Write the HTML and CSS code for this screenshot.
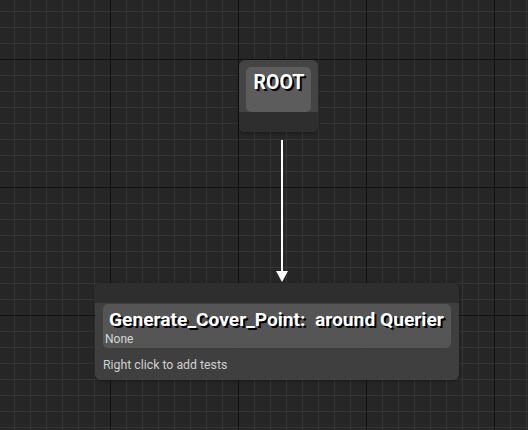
FILE: index.html
```html
<!DOCTYPE html>
<html lang="en">
  <head>
    <meta charset="UTF-8" />
    <meta name="viewport" content="width=device-width, initial-scale=1.0" />
    <title>Query Graph</title>
    <link rel="stylesheet" href="styles.css">
  </head>
  <body>
    <div class="graph">
      <div class="node root-node">
        <div class="root-inner">ROOT</div>
        <div class="root-pin"></div>
      </div>

      <svg class="wire" width="20" height="150" viewBox="0 0 20 150">
        <line x1="10" y1="0" x2="10" y2="132" stroke="#fff" stroke-width="2" />
        <polygon points="4,131 16,131 10,142" fill="#fff" />
      </svg>

      <div class="node option-node">
        <div class="option-pin"></div>
        <div class="option-inner">
          <div class="option-title">Generate_Cover_Point:&nbsp; around Querier</div>
          <div class="option-sub">None</div>
        </div>
        <div class="option-tests">Right click to add tests</div>
      </div>
    </div>
  </body>
</html>
```

FILE: styles.css
```css
body {
  margin: 0;
  font-family: Roboto, "Noto Sans", sans-serif;
}

.graph {
  position: relative;
  width: 528px;
  height: 430px;
  overflow: hidden;
  background-color: #262626;
  background-image:
    linear-gradient(to right, #121212 1px, transparent 1px),
    linear-gradient(to bottom, #121212 1px, transparent 1px),
    linear-gradient(to right, #353535 1px, transparent 1px),
    linear-gradient(to bottom, #353535 1px, transparent 1px);
  background-size: 128px 128px, 128px 128px, 16px 16px, 16px 16px;
  background-position: 110px 59px, 110px 59px, 14px 11px, 14px 11px;
}

.node {
  position: absolute;
  border-radius: 6px;
  overflow: hidden;
  box-shadow: 0 1px 3px rgba(0, 0, 0, 0.4);
}

.root-node {
  left: 239px;
  top: 60px;
  width: 79px;
  height: 72px;
  background: #444444;
  display: flex;
  flex-direction: column;
}

.root-inner {
  margin: 7px 7px 0;
  height: 45px;
  border-radius: 5px;
  background: #5c5c5c;
  color: #fff;
  font-size: 19.5px;
  font-weight: bold;
  text-align: center;
  padding-top: 4px;
  padding-left: 1px;
  box-sizing: border-box;
  text-shadow: 2px 2px 0 #000;
}

.root-pin {
  flex: 1;
  background: #2e2e2e;
}

.wire {
  position: absolute;
  left: 272px;
  top: 140px;
}

.option-node {
  left: 95px;
  top: 283px;
  width: 364px;
  height: 97px;
  display: flex;
  flex-direction: column;
}

.option-pin {
  height: 20px;
  background: #2e2e2e;
}

.option-inner {
  margin: 1px 8px 0;
  height: 44px;
  padding: 4px 6px 0 6px;
  box-sizing: border-box;
  border-radius: 5px;
  background: #555555;
  position: relative;
  z-index: 1;
}

.option-title {
  color: #fff;
  font-size: 19.2px;
  font-weight: bold;
  text-shadow: 2px 2px 0 #000;
  line-height: 24px;
}

.option-sub {
  color: #d6d6d6;
  font-size: 12px;
  line-height: 14px;
  margin-left: -4px;
}

.option-node::before {
  content: "";
  position: absolute;
  left: 0;
  right: 0;
  top: 20px;
  bottom: 0;
  background: rgba(65, 65, 65, 0.94);
}

.option-tests {
  position: relative;
  flex: 1;
  color: #d0d0d0;
  font-size: 12.3px;
  padding: 10px 8px 0;
}
```
